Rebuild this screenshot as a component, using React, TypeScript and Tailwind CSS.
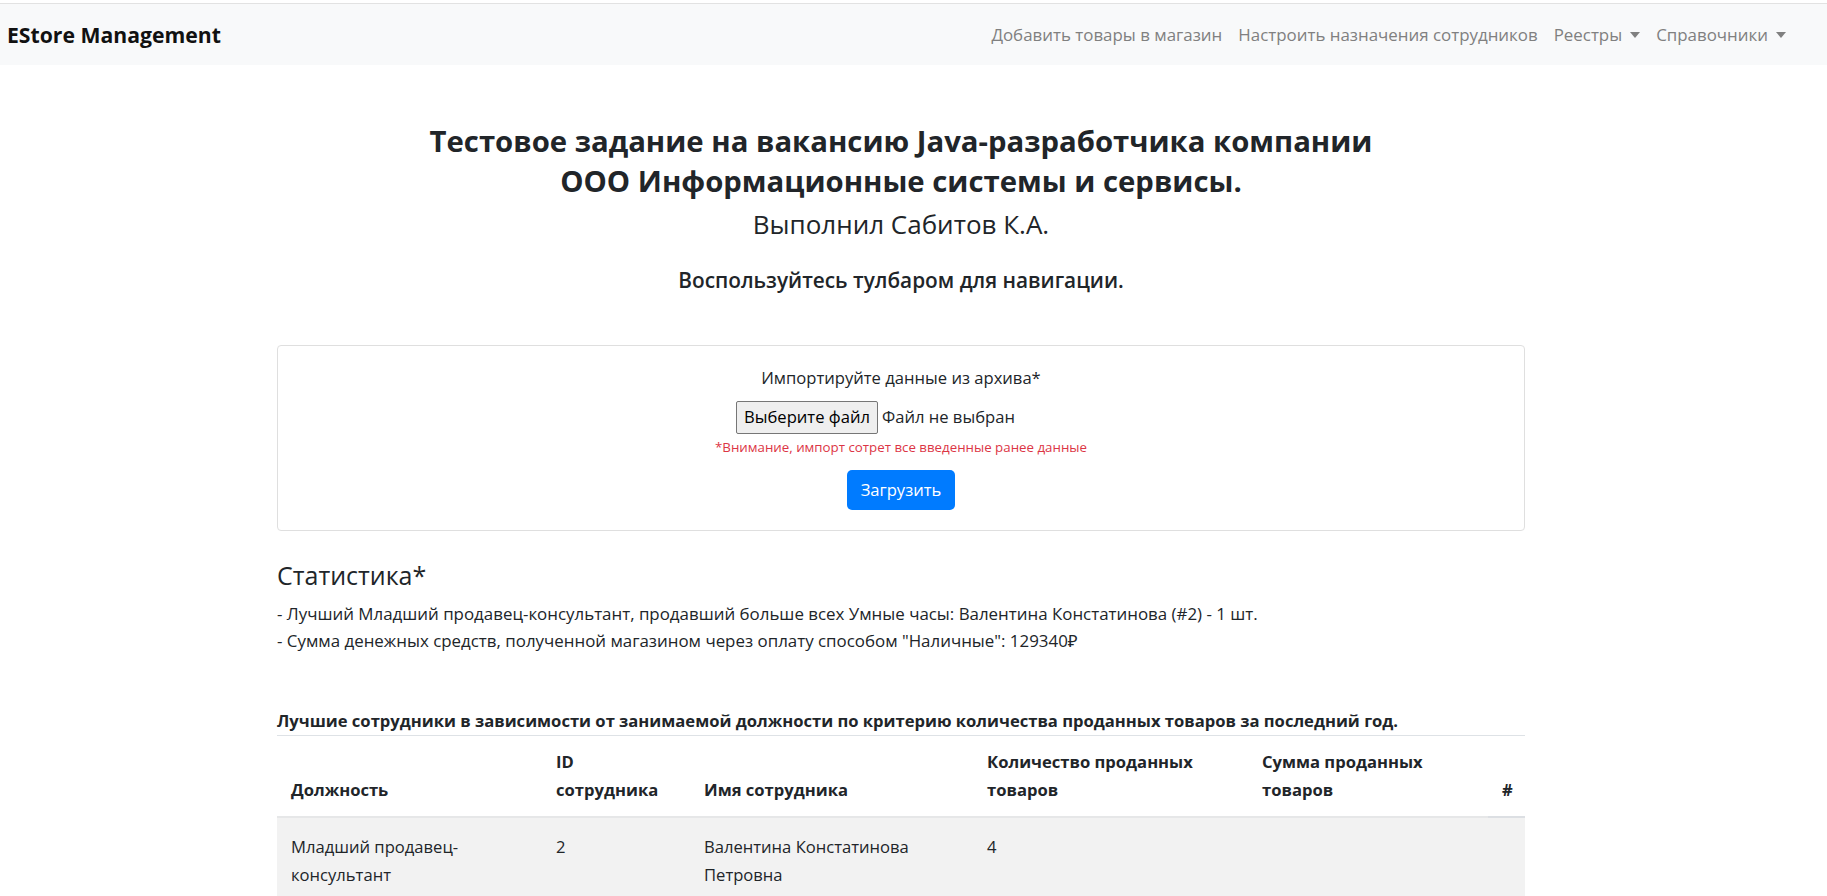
const font = { fontFamily: '"Open Sans", "Noto Sans", sans-serif' };

function Caret() {
  return <span className="ml-[8px] inline-block h-0 w-0 border-x-[5px] border-t-[6px] border-x-transparent border-t-current align-[3px]" />;
}

function Navbar() {
  return (
    <div className="pt-[3px]">
      <nav className="flex h-[62px] items-center justify-between border-t border-[#e2e2e2] bg-[#f8f9fa] pl-[7px] pr-[33px]">
        <span className="text-[21.2px] font-bold text-[#111]">EStore Management</span>
        <div className="flex items-center text-[16.9px] text-[#808080]">
          <span className="px-[8px]">Добавить товары в магазин</span>
          <span className="px-[8px]">Настроить назначения сотрудников</span>
          <span className="px-[8px]">Реестры<Caret /></span>
          <span className="px-[8px]">Справочники<Caret /></span>
        </div>
      </nav>
    </div>
  );
}

function ImportCard() {
  return (
    <div className="mt-[53px] flex flex-col items-center rounded-[4px] border border-[#dfdfdf] px-5 pb-[20px] pt-[20px]">
      <div className="text-[16.6px] leading-[24px]">Импортируйте данные из архива*</div>
      {/* native file inputs reserve empty space to the right */}
      <div className="mt-[11px] flex w-[330px] items-center gap-[4px]">
        <span className="flex h-[33px] items-center rounded-[2px] border border-[#767676] bg-[#efefef] px-[7px] text-[16.6px] text-black">
          Выберите файл
        </span>
        <span className="text-[16.6px]">Файл не выбран</span>
      </div>
      <div className="mt-[4px] text-[13.3px] leading-[19px] text-[#dc3545]">
        *Внимание, импорт сотрет все введенные ранее данные
      </div>
      <button className="mt-[13px] h-[40px] rounded-[5px] bg-[#007bff] px-[14px] text-[16.6px] text-white">
        Загрузить
      </button>
    </div>
  );
}

const cols = [
  { label: "Должность", w: "w-[265px]" },
  { label: "ID сотрудника", w: "w-[148px]" },
  { label: "Имя сотрудника", w: "w-[283px]" },
  { label: "Количество проданных товаров", w: "w-[275px]" },
  { label: "Сумма проданных товаров", w: "w-[240px]" },
  { label: "#", w: "w-[37px]" },
];

const rows = [["Младший продавец-консультант", "2", "Валентина Констатинова Петровна", "4", "", ""]];

function BestTable() {
  return (
    <div className="mt-[53px]">
      <div className="text-[16.6px] font-bold leading-[28px]">
        Лучшие сотрудники в зависимости от занимаемой должности по критерию количества проданных товаров за последний год.
      </div>
      <table className="w-full table-fixed border-collapse text-[16.6px] leading-[28px]">
        <thead>
          <tr>
            {cols.map((c) => (
              <th
                key={c.label}
                className={`${c.w} border-t border-b-2 border-t-[#dee2e6] px-[14px] pb-[12px] pt-[12px] text-left align-bottom font-bold ${
                  c.label === "#" ? "border-b-[#dcdfe3] text-right" : "border-b-[#e6e7e8]"
                }`}
              >
                {c.label}
              </th>
            ))}
          </tr>
        </thead>
        <tbody>
          {rows.map((r, i) => (
            <tr key={i} className="bg-[#f2f2f2]">
              {r.map((v, j) => (
                <td key={j} className="px-[14px] pb-[14px] pt-[15px] align-top">
                  {v}
                </td>
              ))}
            </tr>
          ))}
        </tbody>
      </table>
    </div>
  );
}

export default function App() {
  return (
    <div className="min-h-screen bg-white text-[#212529]" style={font}>
      <Navbar />
      <div className="pr-[25px]">
        <div className="mx-auto w-[1248px]">
          <div className="mt-[56px] text-center">
            <h3 className="text-[29.3px] font-bold leading-[40px]">
              Тестовое задание на вакансию Java-разработчика компании
              <br />
              ООО Информационные системы и сервисы.
            </h3>
            <h4 className="mt-[9px] text-[26px] font-medium leading-[29px]">Выполнил Сабитов К.А.</h4>
            <h5 className="mt-[29px] text-[20.8px] font-semibold leading-[24px]">Воспользуйтесь тулбаром для навигации.</h5>
          </div>

          <ImportCard />

          <div className="mt-[27px]">
            <h4 className="text-[25px] leading-[34px]">Статистика*</h4>
            <div className="mt-[8px] text-[16.9px] leading-[27px]">
              <div>- Лучший Младший продавец-консультант, продавший больше всех Умные часы: Валентина Констатинова (#2) - 1 шт.</div>
              <div>- Сумма денежных средств, полученной магазином через оплату способом "Наличные": 129340₽</div>
            </div>
          </div>

          <BestTable />
        </div>
      </div>
    </div>
  );
}
